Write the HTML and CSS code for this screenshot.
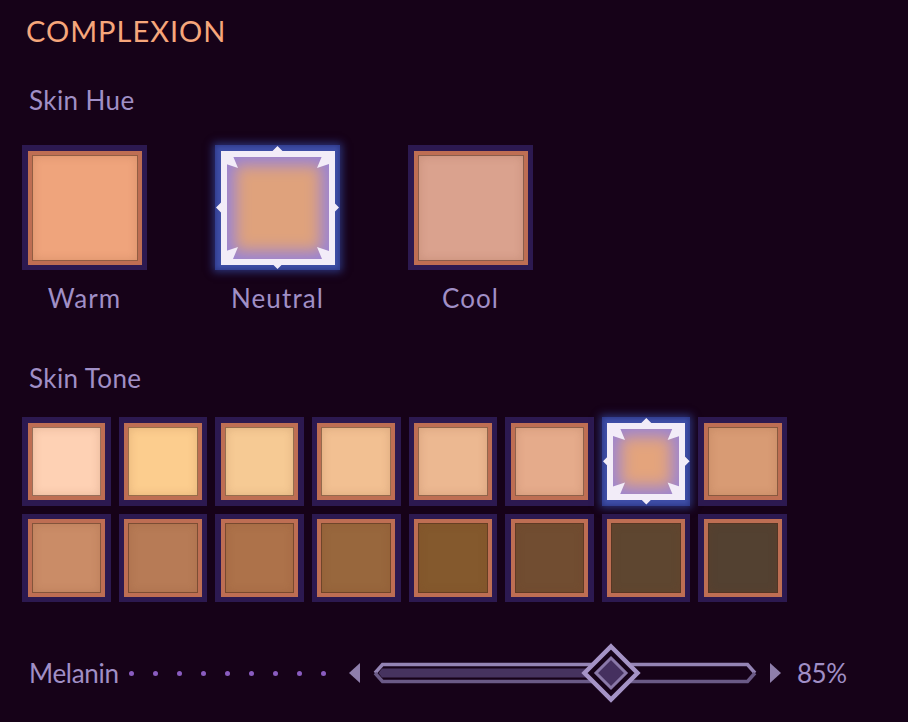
FILE: index.html
```html
<!DOCTYPE html>
<html lang="en">
<head>
  <meta charset="UTF-8" />
  <meta name="viewport" content="width=device-width, initial-scale=1.0" />
  <title>Complexion</title>
  <link rel="stylesheet" href="styles.css">
</head>
<body>
  <h1 class="title">COMPLEXION</h1>

  <h2 class="group-label">Skin Hue</h2>
  <div class="hue-row">
    <div class="hue-item">
      <div class="swatch"><div class="fill hue-warm"></div></div>
      <p class="caption">Warm</p>
    </div>
    <div class="hue-item">
      <div class="swatch selected">
        <div class="fill hue-neutral"></div>
        <svg class="marks" viewBox="0 0 125 125">
          <path d="M11 11h7l5 12L11 19zM114 11h-7l-5 12 12-4zM11 114h7l5-12-12 4zM114 114h-7l-5-12 12 4z"/>
          <path d="M62.500 1l5 5-5 3-5-3zM62.500 124l5-5-5-3-5 3zM1 62.500l5-5 3 5-3 5zM124 62.500l-5-5-3 5 3 5z"/>
        </svg>
      </div>
      <p class="caption">Neutral</p>
    </div>
    <div class="hue-item">
      <div class="swatch"><div class="fill hue-cool"></div></div>
      <p class="caption">Cool</p>
    </div>
  </div>

  <h2 class="group-label tone-label">Skin Tone</h2>
  <div class="tone-grid">
    <div class="swatch small"><div class="fill tone-1"></div></div>
    <div class="swatch small"><div class="fill tone-2"></div></div>
    <div class="swatch small"><div class="fill tone-3"></div></div>
    <div class="swatch small"><div class="fill tone-4"></div></div>
    <div class="swatch small"><div class="fill tone-5"></div></div>
    <div class="swatch small"><div class="fill tone-6"></div></div>
    <div class="swatch small selected">
      <div class="fill tone-7"></div>
      <svg class="marks" viewBox="0 0 88.600 88.600">
        <path d="M11 11h7l5 12L11 19zM77.600 11h-7l-5 12 12-4zM11 77.600h7l5-12-12 4zM77.600 77.600h-7l-5-12 12 4z"/>
        <path d="M44.300 1l5 5-5 3-5-3zM44.300 87.600l5-5-5-3-5 3zM1 44.300l5-5 3 5-3 5zM87.600 44.300l-5-5-3 5 3 5z"/>
      </svg>
    </div>
    <div class="swatch small"><div class="fill tone-8"></div></div>
    <div class="swatch small"><div class="fill tone-9"></div></div>
    <div class="swatch small"><div class="fill tone-10"></div></div>
    <div class="swatch small"><div class="fill tone-11"></div></div>
    <div class="swatch small"><div class="fill tone-12"></div></div>
    <div class="swatch small"><div class="fill tone-13"></div></div>
    <div class="swatch small"><div class="fill tone-14"></div></div>
    <div class="swatch small"><div class="fill tone-15"></div></div>
    <div class="swatch small"><div class="fill tone-16"></div></div>
  </div>

  <div class="slider-row">
    <span class="slider-name">Melanin</span>
    <div class="dots">
      <i></i><i></i><i></i><i></i><i></i><i></i><i></i><i></i><i></i>
    </div>
    <svg class="arrow" viewBox="0 0 11 20"><path d="M11 0v20L0 10z"/></svg>
    <svg class="slider" viewBox="0 0 384 60">
      <path class="track-fill" d="M9 25.500h230v9H9L5.500 30z"/>
      <path class="track-top" d="M2 30l7.500-8.500h365L382 30"/>
      <path class="track-bottom" d="M2 30l7.500 8.500h365L382 30"/>
      <path class="thumb-back" d="M238 1l29 29-29 29-29-29z"/>
      <path class="thumb-outer" d="M238 3.500L264.500 30 238 56.500 211.500 30z"/>
      <path class="thumb-inner" d="M238 15l15 15-15 15-15-15z"/>
    </svg>
    <svg class="arrow" viewBox="0 0 11 20"><path d="M0 0v20l11-10z"/></svg>
    <span class="slider-value">85%</span>
  </div>
</body>
</html>
```

FILE: styles.css
```css
* { box-sizing: border-box; }
body { margin: 0; padding: 13px 0 0 22px; background: #160218; font-family: Lato, "Open Sans", sans-serif; color: #a08fc6; width: 908px; height: 722px; overflow: hidden; }

.title { margin: 0 0 36px 4px; font-size: 29px; line-height: 36px; font-weight: 400; color: #f6a67b; letter-spacing: 1px; }
.group-label { margin: 0 0 30px 7px; font-size: 26px; line-height: 30px; font-weight: 400; letter-spacing: 0.400px; }
.tone-label { margin-top: 50px; margin-bottom: 24px; }

.hue-row { display: flex; gap: 68px; }
.hue-item { width: 125px; text-align: center; }
.caption { margin: 13px 0 0; font-size: 26px; line-height: 30px; letter-spacing: 1.100px; }

.swatch { position: relative; aspect-ratio: 1; padding: 5.500px; background: #2c1950; }
.fill { width: 100%; height: 100%; border: 4.500px solid #be6e53; box-shadow: inset 0 0 0 1px rgba(80, 45, 30, 0.55), inset 0 0 10px 1px rgba(120, 60, 35, 0.18); }

.swatch.selected { background: #3f4fa8; box-shadow: 0 0 8px 2px rgba(47, 60, 140, 0.85), inset 0 0 5px 1px #2b3583; }
.swatch.selected .fill { border: 6px solid #f2ecf8; box-shadow: inset 0 0 15px 8px #9883d6; }
.swatch.small.selected .fill { box-shadow: inset 0 0 16px 7px #9883d6; }
.marks { position: absolute; inset: 0; width: 100%; height: 100%; fill: #f2ecf8; }

.hue-warm { background-color: #efa47c; }
.hue-neutral { background-color: #dfa27c; }
.hue-cool { background-color: #daa28e; }

.tone-grid { display: grid; grid-template-columns: repeat(8, 88.625px); gap: 8px; }
.tone-1 { background-color: #fed1b4; }
.tone-2 { background-color: #fccd8e; }
.tone-3 { background-color: #f6ca94; }
.tone-4 { background-color: #f2c092; }
.tone-5 { background-color: #ecb891; }
.tone-6 { background-color: #e5ab8b; }
.tone-7 { background-color: #e4a47c; }
.tone-8 { background-color: #d89b74; }
.tone-9 { background-color: #ca8c67; }
.tone-10 { background-color: #b77b56; }
.tone-11 { background-color: #ad724a; }
.tone-12 { background-color: #98673d; }
.tone-13 { background-color: #84592d; }
.tone-14 { background-color: #714d31; }
.tone-15 { background-color: #5e4630; }
.tone-16 { background-color: #534131; }

.slider-row { display: flex; align-items: center; height: 60px; margin: 41px 0 0 7px; font-size: 26px; }
.slider-name { width: 100px; letter-spacing: -0.300px; }
.dots { display: flex; gap: 19px; width: 220px; }
.dots i { width: 5px; height: 5px; border-radius: 50%; background: #8a5cc0; }
.arrow { width: 11px; height: 20px; fill: #8f7fac; }
.slider { width: 384px; height: 60px; margin: 0 13px; }
.track-fill { fill: #46335f; }
.track-top { fill: none; stroke: #9484b4; stroke-width: 3.500; }
.track-bottom { fill: none; stroke: #6a5a86; stroke-width: 3.500; }
.thumb-back { fill: #160218; }
.thumb-outer { fill: #160218; stroke: #a593c6; stroke-width: 4.500; }
.thumb-inner { fill: #45305f; stroke: #8a78a8; stroke-width: 3; }
.slider-value { margin-left: 16px; letter-spacing: -0.500px; }
```
